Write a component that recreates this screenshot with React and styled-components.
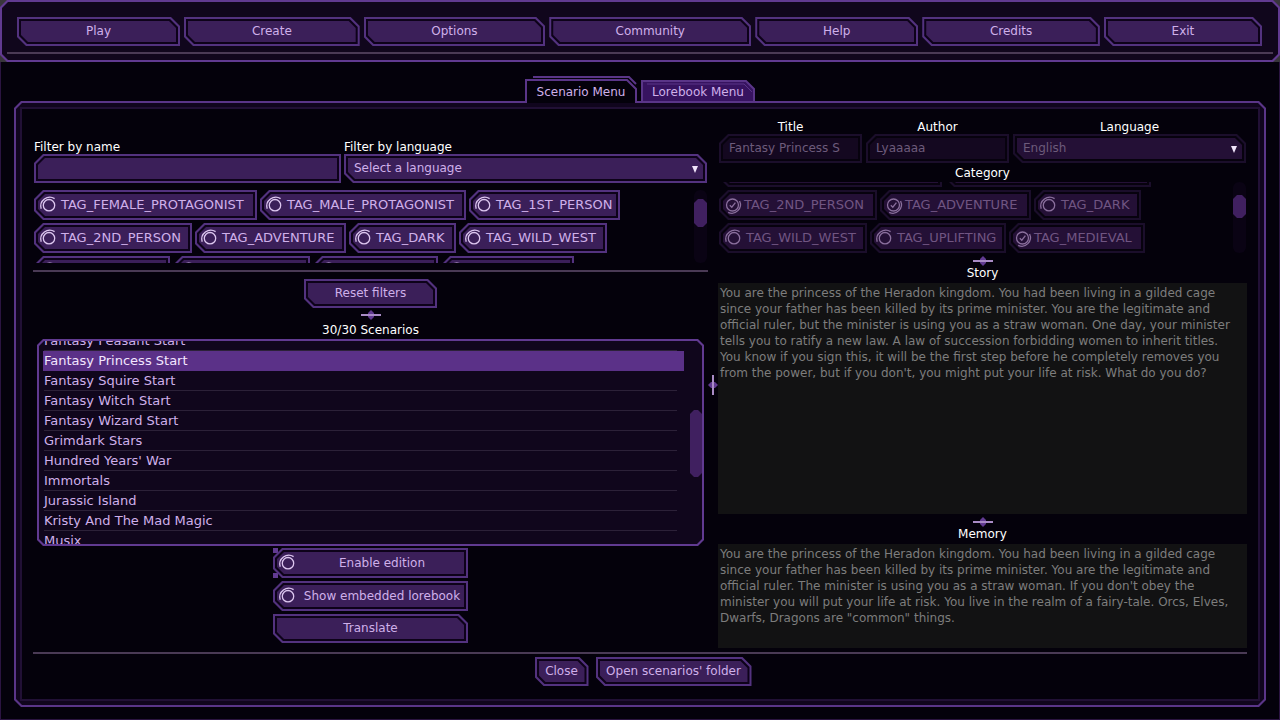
import React, { useLayoutEffect, useRef, useState } from 'react';
import styled, { createGlobalStyle, css } from 'styled-components';

const GlobalStyle = createGlobalStyle`
  * {
    box-sizing: border-box;
  }
  body {
    margin: 0;
    background: #38363b;
    color: #cfb0ea;
    font-family: "DejaVu Sans", Verdana, sans-serif;
    font-size: 12px;
    line-height: 14px;
  }
  button, input, select, textarea {
    font: inherit;
    color: inherit;
  }
`

// corners cut at 45 degrees, in the order top-left, top-right, bottom-right, bottom-left
const cut = (tl, tr, br, bl) => `polygon(
  ${tl}px 0, calc(100% - ${tr}px) 0,
  100% ${tr}px, 100% calc(100% - ${br}px),
  calc(100% - ${br}px) 100%, ${bl}px 100%,
  0 calc(100% - ${bl}px), 0 ${tl}px
)`

const shapes = {
  button: [0, 1, 0, 1],
  tag: [1, 0, 0, 1],
  input: [1, 0, 0, 0],
}

const cutShape = (shape, size) => cut(...shapes[shape].map(c => c * size))

const Page = styled.div`
  display: flex;
  flex-direction: column;
  height: 100vh;
  min-height: 640px;
`

const Border = css`
  display: flex;
  padding: 2px;
  background: ${p => (p.$off ? '#1b0e2b' : '#53327f')};
  clip-path: ${p => cutShape(p.$shape, 9)};
`

const Gap = styled.span`
  display: flex;
  flex: 1;
  min-width: 0;
  padding: 2px;
  background: ${p => (p.$off ? '#07020e' : '#0d0219')};
  clip-path: ${p => cutShape(p.$shape, 8)};
`

const Fill = styled.span`
  display: flex;
  flex: 1;
  align-items: center;
  justify-content: center;
  min-width: 0;
  background: ${p => (p.$dim ? '#140820' : p.$off ? '#241036' : '#3b1f59')};
  clip-path: ${p => cutShape(p.$shape, 7)};
`

const ButtonFrame = styled.button`
  ${Border}
  flex: ${p => p.$grow || 'none'};
  width: ${p => (p.$width ? `${p.$width}px` : 'auto')};
  height: 29px;
  border: 0;
  cursor: pointer;
  white-space: nowrap;
  &:hover {
    background: #8455c0;
  }
`

const ButtonText = styled.span`
  padding-bottom: 2px;
`

const TagFrame = styled.label`
  ${Border}
  position: relative;
  width: ${p => p.$width}px;
  height: 30px;
  color: ${p => (p.$off ? '#705582' : '#cfb0ea')};
  white-space: nowrap;
`

const TagInput = styled.input`
  position: absolute;
  inset: 0;
  width: 100%;
  height: 100%;
  margin: 0;
  opacity: 0;
`

const TagText = styled.span`
  flex: 1;
  padding-left: ${p => (p.$on ? 1 : 3)}px;
  padding-bottom: 1px;
  font-size: ${p => (p.$center ? 12 : 13)}px;
  text-align: ${p => (p.$center ? 'center' : 'left')};
`

const TagIcon = styled.svg`
  flex: none;
  width: 20px;
  height: 22px;
`

const TopBarEdge = styled.header`
  padding: 2px;
  background: #613a91;
  clip-path: ${cut(7, 7, 7, 7)};
`

const TopBar = styled.div`
  height: 58px;
  padding: 15px 5px 0;
  background: #10061c;
  clip-path: ${cut(6, 6, 6, 6)};
`

const Nav = styled.nav`
  display: flex;
  gap: 4px;
  padding: 0 11px 0 10px;
`

const Line = styled.hr`
  width: 100%;
  height: 2px;
  margin: ${p => p.$top || 0}px 0 0;
  border: 0;
  background: #4a3a55;
`

const Main = styled.main`
  display: flex;
  flex: 1;
  flex-direction: column;
  min-height: 0;
  padding: 14px 13px 12px;
  border: 1px solid #2b1441;
  border-top: 0;
  background: #04010b;
`

const Tabs = styled.div`
  position: relative;
  z-index: 1;
  display: flex;
  justify-content: center;
  align-items: flex-end;
  gap: 4px;
  margin-bottom: -2px;
  flex: none;
`

const Tab = styled.button`
  position: relative;
  width: ${p => p.$width}px;
  height: ${p => (p.$active ? 27 : 23)}px;
  padding: ${p => (p.$active ? 4 : 0)}px 0 0;
  border: 0;
  background: none;
  color: #cfb0ea;
  cursor: pointer;
  white-space: nowrap;
`

const TabShape = styled.svg`
  position: absolute;
  inset: 0;
  width: 100%;
  height: 100%;
`

const TabText = styled.span`
  position: relative;
`

const PanelEdge = styled.section`
  display: flex;
  flex: 1;
  min-height: 0;
  padding: 2px;
  background: #5a3588;
  clip-path: ${cut(7, 7, 7, 7)};
`

const PanelBand = styled.div`
  display: flex;
  flex: 1;
  min-width: 0;
  padding: 4px;
  background: #10051d;
  clip-path: ${cut(6, 6, 6, 6)};
`

const Panel = styled.div`
  display: flex;
  flex: 1;
  flex-direction: column;
  min-width: 0;
  padding: 0 11px 13px;
  border: 2px solid #211035;
  background: #04010b;
`

const Columns = styled.div`
  display: grid;
  grid-template-columns: 675fr 10px 529fr;
  flex: 1;
  min-height: 0;
`

const Column = styled.div`
  display: flex;
  flex-direction: column;
  align-items: center;
  min-width: 0;
  min-height: 0;
  padding: ${p => p.$pad};
`

const Divider = styled.div`
  display: flex;
  justify-content: center;
  padding-top: 266px;
`

const Fields = styled.div`
  display: flex;
  align-self: stretch;
  gap: ${p => p.$gap}px;
  padding: 0 1px;
`

const Field = styled.label`
  display: flex;
  flex: ${p => p.$grow} 1 0;
  flex-direction: column;
  min-width: 0;
  color: #fff;
  text-align: ${p => (p.$center ? 'center' : 'left')};
`

const FieldFrame = styled.span`
  ${Border}
  height: 29px;
  color: ${p => (p.$off ? '#6d5b7b' : '#cfb0ea')};
`

const TextInput = styled.input`
  flex: 1;
  min-width: 0;
  padding: 0 6px 2px;
  border: 0;
  outline: 0;
  background: none;
`

const SelectInput = styled.select`
  flex: 1;
  min-width: 0;
  padding: 0 6px 2px;
  border: 0;
  outline: 0;
  background: none;
  appearance: none;
  opacity: 1;
`

const Arrow = styled.svg`
  flex: none;
  width: 8px;
  height: 8px;
  margin-right: 4px;
`

const TagArea = styled.div`
  display: flex;
  flex: none;
  align-self: stretch;
  height: ${p => p.$height}px;
  margin-top: ${p => p.$top}px;
  padding: 0 1px;
`

const TagScroll = styled.div`
  display: flex;
  flex: 1;
  flex-wrap: wrap;
  align-content: flex-start;
  gap: 3px;
  padding-right: 64px;
  overflow: auto;
  scrollbar-width: none;
`

const Track = styled.div`
  flex: none;
  width: ${p => (p.$clear ? 12 : 13)}px;
  padding-top: ${p => p.$top}px;
  border-radius: 6px;
  background: ${p => (p.$clear ? 'none' : '#0a0314')};
`

const Thumb = styled.div`
  height: ${p => p.$height}px;
  background: #402060;
  clip-path: ${cut(4, 4, 4, 4)};
`

const Heading = styled.h2`
  flex: none;
  margin: ${p => p.$top || 0}px 0 0;
  color: #fff;
  font-size: 12px;
  font-weight: 400;
  line-height: 14px;
`

const Grip = styled.svg`
  flex: none;
  width: ${p => (p.$vertical ? 10 : 20)}px;
  height: ${p => (p.$vertical ? 20 : 10)}px;
  margin-top: ${p => p.$top || 0}px;
`

const Spacer = styled.div`
  flex: none;
  height: 7px;
`

const ListEdge = styled.div`
  display: flex;
  flex: 1;
  align-self: stretch;
  min-height: 0;
  margin: 2px 4px;
  padding: 2px;
  background: #613a91;
  clip-path: ${cut(6, 6, 6, 6)};
`

const ListBody = styled.div`
  display: flex;
  flex: 1;
  min-width: 0;
  padding-left: 4px;
  gap: 6px;
  background: #10061c;
  clip-path: ${cut(5, 5, 5, 5)};
`

const List = styled.ul`
  flex: 1;
  margin: 0;
  padding: 0;
  overflow: auto;
  list-style: none;
  scrollbar-width: none;
`

const Item = styled.li`
  height: 20px;
  padding: 0 7px 0 1px;
  background: ${p => (p.$selected ? '#5b3188' : 'none')};
  color: ${p => (p.$selected ? '#f3e6ff' : '#cfb0ea')};
  cursor: pointer;
`

const ItemText = styled.span`
  display: block;
  height: 20px;
  border-bottom: 1px solid ${p => (p.$selected ? 'transparent' : '#2c2138')};
  font-size: 13px;
  line-height: 20px;
`

const Actions = styled.div`
  display: flex;
  flex: none;
  flex-direction: column;
  gap: 3px;
  padding-bottom: 9px;
`

const Focused = styled.div`
  background:
    linear-gradient(#613a91, #613a91) 0 0 / 5px 5px no-repeat,
    linear-gradient(#613a91, #613a91) 0 100% / 5px 5px no-repeat;
`

const LongText = styled.textarea`
  display: block;
  flex: ${p => (p.$height ? 'none' : '1')};
  align-self: stretch;
  height: ${p => (p.$height ? `${p.$height}px` : 'auto')};
  min-height: 0;
  margin: 3px 0 0;
  padding: 2px 2px;
  border: 0;
  outline: 0;
  resize: none;
  overflow: hidden;
  background: #121213;
  color: #7d7d7d;
  line-height: 16px;
`

const Footer = styled.footer`
  display: flex;
  justify-content: center;
  gap: 7px;
  padding: 3px 0 0 6px;
`

const menu = [
  ['Play', 163],
  ['Create', 176],
  ['Options', 182],
  ['Community', 203],
  ['Help', 163],
  ['Credits', 178],
  ['Exit', 158],
]

const filterTags = [
  ['TAG_FEMALE_PROTAGONIST', 223],
  ['TAG_MALE_PROTAGONIST', 206],
  ['TAG_1ST_PERSON', 151],
  ['TAG_2ND_PERSON', 158],
  ['TAG_ADVENTURE', 151],
  ['TAG_DARK', 107],
  ['TAG_WILD_WEST', 148],
  ['TAG_UPLIFTING', 136],
  ['TAG_MEDIEVAL', 137],
  ['TAG_SCI_FI', 125],
  ['TAG_MODERN', 133],
]

const scenarioTags = [
  ['TAG_FEMALE_PROTAGONIST', 223, true],
  ['TAG_MALE_PROTAGONIST', 206],
  ['TAG_2ND_PERSON', 158, true],
  ['TAG_ADVENTURE', 151, true],
  ['TAG_DARK', 107],
  ['TAG_WILD_WEST', 148],
  ['TAG_UPLIFTING', 136],
  ['TAG_MEDIEVAL', 136, true],
]

const scenarios = [
  'Fantasy Peasant Start',
  'Fantasy Princess Start',
  'Fantasy Squire Start',
  'Fantasy Witch Start',
  'Fantasy Wizard Start',
  'Grimdark Stars',
  "Hundred Years' War",
  'Immortals',
  'Jurassic Island',
  'Kristy And The Mad Magic',
  'Musix',
]

const story = [
  'You are the princess of the Heradon kingdom. You had been living in a gilded cage',
  'since your father has been killed by its prime minister. You are the legitimate and',
  'official ruler, but the minister is using you as a straw woman. One day, your minister',
  'tells you to ratify a new law. A law of succession forbidding women to inherit titles.',
  'You know if you sign this, it will be the first step before he completely removes you',
  "from the power, but if you don't, you might put your life at risk. What do you do?",
].join('\n')

const memory = [
  'You are the princess of the Heradon kingdom. You had been living in a gilded cage',
  'since your father has been killed by its prime minister. You are the legitimate and',
  "official ruler. The minister is using you as a straw woman. If you don't obey the",
  'minister you will put your life at risk. You live in the realm of a fairy-tale. Orcs, Elves,',
  'Dwarfs, Dragons are "common" things.',
].join('\n')

const Button = ({ children, ...rest }) => (
  <ButtonFrame type="button" $shape="button" {...rest}>
    <Gap $shape="button">
      <Fill $shape="button">
        <ButtonText>{children}</ButtonText>
      </Fill>
    </Gap>
  </ButtonFrame>
)

const Toggle = ({ text, width, checked, off, center }) => {
  const [on, setOn] = useState(Boolean(checked))
  return (
    <TagFrame $shape="tag" $width={width} $off={off}>
      <TagInput type="checkbox" checked={on} disabled={off} onChange={() => setOn(!on)} />
      <Gap $shape="tag" $off={off}>
        <Fill $shape="tag" $off={off}>
          <TagIcon viewBox="0 0 20 22" fill="none" stroke={off ? '#8a6f9d' : '#dcc6ef'} strokeWidth="1.3">
            {on ? (
              <>
                <circle cx="9.5" cy="11" r="6" />
                <path d="M6.8 11.2l2 2 3.6-4.6" />
                <path d="M16.6 7a8.6 8.6 0 0 1-11.4 11.4" />
              </>
            ) : (
              <>
                <circle cx="11" cy="11.2" r="5.7" />
                <path d="M3.2 14.8a9 9 0 0 1 13.4-10.2" />
              </>
            )}
          </TagIcon>
          <TagText $center={center} $on={on}>{text}</TagText>
        </Fill>
      </Gap>
    </TagFrame>
  )
}

const Handle = ({ top, vertical }) => (
  <Grip $top={top} $vertical={vertical} viewBox={vertical ? '0 0 10 20' : '0 0 20 10'}>
    <g transform={vertical ? 'translate(10 0) rotate(90)' : undefined}>
      <path d="M10 0l3 3v4l-3 3-3-3V3z" fill="#613a91" />
      <path d="M0 5h20" stroke="#a98bc6" strokeWidth="2" />
    </g>
  </Grip>
)

const Select = ({ options, off }) => (
  <FieldFrame $shape="button" $off={off}>
    <Gap $shape="button" $off={off}>
      <Fill $shape="button" $off={off}>
        <SelectInput disabled={off}>
          {options.map(option => <option key={option}>{option}</option>)}
        </SelectInput>
        <Arrow viewBox="0 0 8 8"><path d="M1 1h6L4 8z" fill="#f0e4fa" /></Arrow>
      </Fill>
    </Gap>
  </FieldFrame>
)

const Input = ({ value, off }) => (
  <FieldFrame $shape="input" $off={off}>
    <Gap $shape="input" $off={off}>
      <Fill $shape="input" $dim={off}>
        <TextInput type="text" defaultValue={value} disabled={off} />
      </Fill>
    </Gap>
  </FieldFrame>
)

const ScenarioList = () => {
  const [selected, setSelected] = useState('Fantasy Princess Start')
  const list = useRef(null)

  useLayoutEffect(() => {
    list.current.scrollTop = 10
  }, [])

  return (
    <ListEdge>
      <ListBody>
        <List ref={list}>
          {scenarios.map(name => (
            <Item key={name} $selected={name === selected} onClick={() => setSelected(name)}>
              <ItemText $selected={name === selected}>{name}</ItemText>
            </Item>
          ))}
        </List>
        <Track $top={69} $clear><Thumb $height={67} /></Track>
      </ListBody>
    </ListEdge>
  )
}

const ScenarioTags = () => {
  const area = useRef(null)

  useLayoutEffect(() => {
    area.current.scrollTop = 25
  }, [])

  return (
    <TagArea $height={71} $top={2}>
      <TagScroll ref={area}>
        {scenarioTags.map(([text, width, checked]) => (
          <Toggle key={text} text={text} width={width} checked={checked} off />
        ))}
      </TagScroll>
      <Track $top={13}><Thumb $height={23} /></Track>
    </TagArea>
  )
}

export default function App() {
  return (
    <Page>
      <GlobalStyle />
      <TopBarEdge>
        <TopBar>
          <Nav>
            {menu.map(([text, size]) => (
              <Button key={text} $grow={`${size} 1 0`}>{text}</Button>
            ))}
          </Nav>
          <Line $top={6} />
        </TopBar>
      </TopBarEdge>
      <Main>
        <Tabs>
          <Tab type="button" $active $width={112}>
            <TabShape viewBox="0 0 112 27">
              <path d="M1 27V4h101l9 9v14" fill="#04010b" stroke="#5a3588" strokeWidth="2" />
              <path d="M8 1h96l7 7" fill="none" stroke="#5a3588" strokeWidth="2" />
            </TabShape>
            <TabText>Scenario Menu</TabText>
          </Tab>
          <Tab type="button" $width={114}>
            <TabShape viewBox="0 0 114 23">
              <path d="M1 22V1h104l8 8v13z" fill="#371360" stroke="#5a3588" strokeWidth="2" />
              <path d="M6 4h97l8 8" fill="none" stroke="#5a3588" strokeWidth="1" />
            </TabShape>
            <TabText>Lorebook Menu</TabText>
          </Tab>
        </Tabs>
        <PanelEdge>
          <PanelBand>
            <Panel>
              <Columns>
                <Column $pad="31px 0 0">
                  <Fields $gap={3}>
                    <Field $grow={307}>
                      Filter by name
                      <Input />
                    </Field>
                    <Field $grow={363}>
                      Filter by language
                      <Select options={['Select a language', 'English']} />
                    </Field>
                  </Fields>
                  <TagArea $height={73} $top={7}>
                    <TagScroll>
                      {filterTags.map(([text, width]) => (
                        <Toggle key={text} text={text} width={width} />
                      ))}
                    </TagScroll>
                    <Track $top={9}><Thumb $height={28} /></Track>
                  </TagArea>
                  <Line $top={7} />
                  <Spacer />
                  <Button $width={133}>Reset filters</Button>
                  <Handle top={2} />
                  <Heading $top={3}>30/30 Scenarios</Heading>
                  <ScenarioList />
                  <Actions>
                    <Focused>
                      <Toggle text="Enable edition" width={195} center />
                    </Focused>
                    <Toggle text="Show embedded lorebook" width={195} center />
                    <Button $width={195}>Translate</Button>
                  </Actions>
                </Column>
                <Divider>
                  <Handle vertical />
                </Divider>
                <Column $pad="11px 0 4px">
                  <Fields $gap={4}>
                    <Field $grow={143} $center>
                      Title
                      <Input value="Fantasy Princess S" off />
                    </Field>
                    <Field $grow={143} $center>
                      Author
                      <Input value="Lyaaaaa" off />
                    </Field>
                    <Field $grow={233} $center>
                      Language
                      <Select options={['English']} off />
                    </Field>
                  </Fields>
                  <Heading $top={3}>Category</Heading>
                  <ScenarioTags />
                  <Handle top={3} />
                  <Heading>Story</Heading>
                  <LongText aria-label="Story" defaultValue={story} readOnly />
                  <Handle top={3} />
                  <Heading>Memory</Heading>
                  <LongText aria-label="Memory" $height={104} defaultValue={memory} readOnly />
                </Column>
              </Columns>
              <Line />
              <Footer>
                <Button $width={54}>Close</Button>
                <Button $width={156}>Open scenarios' folder</Button>
              </Footer>
            </Panel>
          </PanelBand>
        </PanelEdge>
      </Main>
    </Page>
  )
}
